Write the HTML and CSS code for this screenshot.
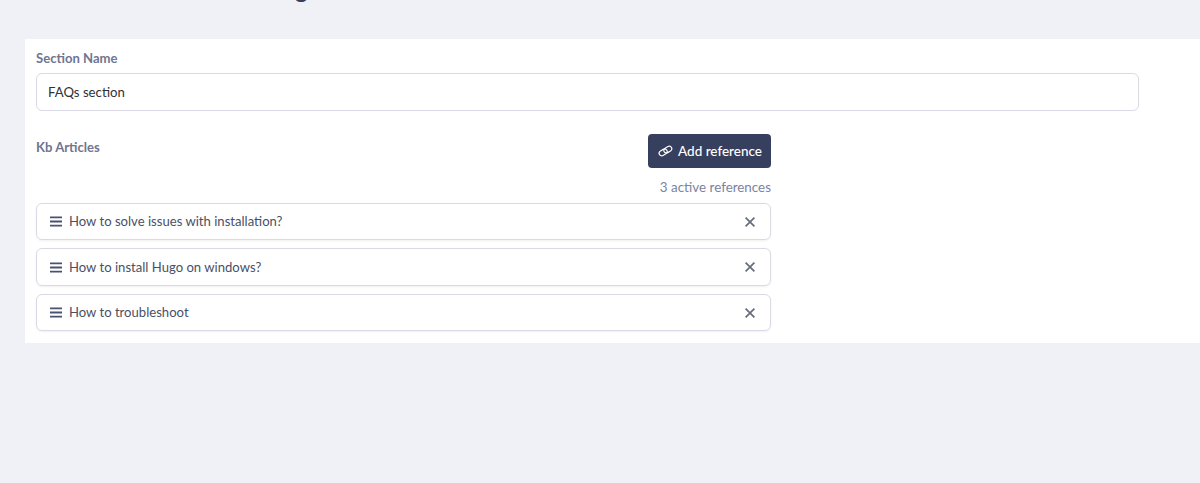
FILE: index.html
```html
<!DOCTYPE html>
<html>
<head>
    <meta charset="UTF-8">
    <meta name="viewport" content="width=device-width, initial-scale=1.0">
    <title>FAQs section</title>
    <link rel="stylesheet" href="styles.css">
</head>
<body>
    <div class="page-title"><h1>Editing</h1></div>

    <div class="panel">
        <label class="field-label" for="sectionName">Section Name</label>
        <input class="text-input" type="text" id="sectionName" value="FAQs section">

        <div class="articles">
            <div class="articles-head">
                <span class="field-label">Kb Articles</span>
                <button class="add-button" type="button">
                    <svg class="link-icon" viewBox="0 0 16 12" fill="none" stroke="currentColor" stroke-width="1.3">
                        <rect x="1" y="4.75" width="9" height="5.5" rx="2.75" transform="rotate(-30 5.5 7.5)"/>
                        <rect x="6" y="1.75" width="9" height="5.5" rx="2.75" transform="rotate(-30 10.5 4.5)"/>
                    </svg>
                    Add reference
                </button>
            </div>
            <p class="active-count">3 active references</p>

            <div class="ref-row">
                <svg class="drag-icon" viewBox="0 0 12 11"><path d="M0 .4h12v1.9H0zM0 4.55h12v1.9H0zM0 8.7h12v1.9H0z"/></svg>
                <span class="ref-title">How to solve issues with installation?</span>
                <svg class="close-icon" viewBox="0 0 10 10"><path d="M.6.6l8.8 8.8M9.4.6L.6 9.4"/></svg>
            </div>
            <div class="ref-row">
                <svg class="drag-icon" viewBox="0 0 12 11"><path d="M0 .4h12v1.9H0zM0 4.55h12v1.9H0zM0 8.7h12v1.9H0z"/></svg>
                <span class="ref-title">How to install Hugo on windows?</span>
                <svg class="close-icon" viewBox="0 0 10 10"><path d="M.6.6l8.8 8.8M9.4.6L.6 9.4"/></svg>
            </div>
            <div class="ref-row">
                <svg class="drag-icon" viewBox="0 0 12 11"><path d="M0 .4h12v1.9H0zM0 4.55h12v1.9H0zM0 8.7h12v1.9H0z"/></svg>
                <span class="ref-title">How to troubleshoot</span>
                <svg class="close-icon" viewBox="0 0 10 10"><path d="M.6.6l8.8 8.8M9.4.6L.6 9.4"/></svg>
            </div>
        </div>
    </div>
</body>
</html>
```

FILE: styles.css
```css
body {
    background-color: #f0f1f7;
    font-family: "Lato", sans-serif;
    margin: 0;
    height: 483px;
    overflow: hidden;
}

/* only the tail of the heading shows above the fold */
.page-title {
    height: 39px;
    padding-left: 233px;
    overflow: hidden;
}
.page-title h1 {
    margin: -26px 0 0;
    font-size: 24px;
    line-height: 29px;
    font-weight: 700;
    color: #363f5e;
}

.panel {
    margin-left: 25px;
    height: 304px;
    box-sizing: border-box;
    padding: 11px 0 0 11px;
    background-color: #ffffff;
}

.field-label {
    display: block;
    font-size: 13.1px;
    line-height: 16px;
    font-weight: 700;
    color: #6f7592;
}

.text-input {
    display: block;
    box-sizing: border-box;
    width: 1103px;
    height: 38px;
    margin-top: 7px;
    padding: 0 11px;
    border: 1px solid #d9dae6;
    border-radius: 6px;
    font-family: inherit;
    font-size: 13.2px;
    color: #303136;
}

.articles {
    width: 735px;
    margin-top: 23px;
}
.articles-head {
    display: flex;
    justify-content: space-between;
    align-items: flex-start;
}
.articles-head .field-label {
    margin-top: 5px;
}

.add-button {
    display: flex;
    align-items: center;
    gap: 5px;
    height: 34px;
    width: 123px;
    padding: 0 0 0 10px;
    border: none;
    border-radius: 4px;
    background-color: #363f5e;
    color: #ffffff;
    font-family: inherit;
    font-size: 13.5px;
    font-weight: 500;
}
.link-icon {
    width: 15px;
    height: 12px;
}

.active-count {
    margin: 11px 0 7.8px;
    text-align: right;
    font-size: 13.4px;
    line-height: 16px;
    color: #7b82a3;
}

.ref-row {
    display: flex;
    align-items: center;
    box-sizing: border-box;
    height: 37.5px;
    margin-bottom: 8px;
    padding: 0 15px 0 13px;
    border: 1px solid #d9dae6;
    border-radius: 6px;
    box-shadow: 0 1px 2px rgba(60, 65, 110, 0.08);
}
.drag-icon {
    width: 12px;
    height: 11px;
    fill: #4b5170;
}
.ref-title {
    flex: 1;
    margin-left: 7px;
    padding-bottom: 1px;
    font-size: 13.1px;
    color: #4a4f66;
}
.close-icon {
    width: 10px;
    height: 10px;
    fill: none;
    stroke: #666c7c;
    stroke-width: 1.7;
}
```
